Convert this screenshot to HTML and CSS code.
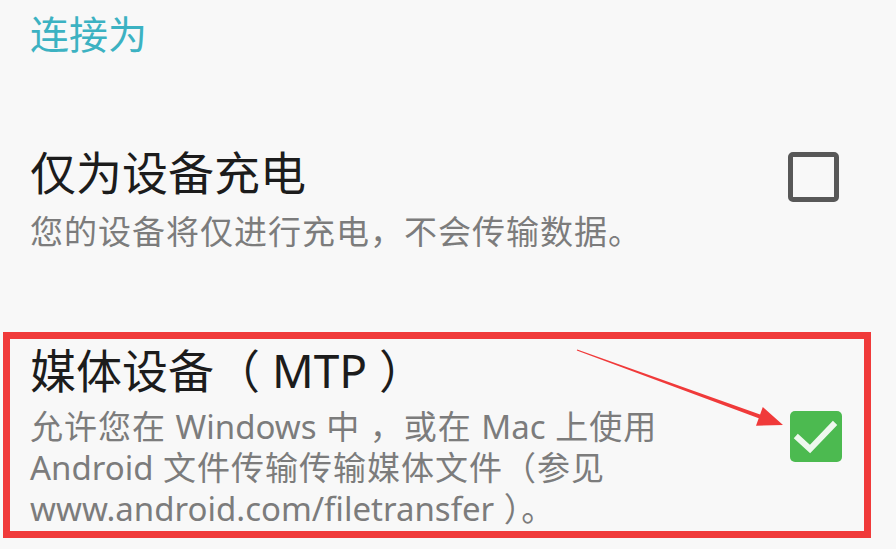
FILE: index.html
```html
<!DOCTYPE html>
<html lang="zh-CN">
<head>
<meta charset="utf-8">
<title>连接为</title>
<link rel="stylesheet" href="styles.css">
</head>
<body>
<div class="page">
  <div class="section-title">连接为</div>

  <div class="row row-first">
    <div class="row-text">
      <div class="row-title">仅为设备充电</div>
      <div class="row-sub">您的设备将仅进行充电，不会传输数据。</div>
    </div>
    <div class="checkbox checkbox-off"></div>
  </div>

  <div class="row row-highlight">
    <div class="row-text">
      <div class="row-title">媒体设备（ MTP ）</div>
      <div class="row-desc">允许您在 <span class="latin">Windows</span> 中 ，或在 <span class="latin">Mac</span> 上使用<br><span class="latin">Android</span> 文件传输传输媒体文件（参见<br><span class="latin">www.android.com/filetransfer</span> ）。</div>
    </div>
    <div class="checkbox checkbox-on">
      <svg viewBox="0 0 52 51" width="52" height="51">
        <polyline points="8,27 20,38 43,14" fill="none" stroke="#eef8ee" stroke-width="6" stroke-linecap="square" stroke-linejoin="miter"/>
      </svg>
    </div>
  </div>

  <svg class="arrow" width="896" height="549" viewBox="0 0 896 549">
    <polygon points="577.2,349.5 760.1,414.4 762.8,406.9 783,425 756,425.7 758.7,418.2 576.8,350.5" fill="#f03a3a"/>
  </svg>
</div>
</body>
</html>
```

FILE: styles.css
```css
html, body {
  margin: 0;
  padding: 0;
  background: #f8f8f8;
}

.page {
  position: relative;
  width: 896px;
  height: 549px;
  overflow: hidden;
  font-family: "Noto Sans", "Noto Sans CJK SC", sans-serif;
}

.section-title {
  margin-top: 12px;
  padding-left: 30px;
  font-size: 39px;
  line-height: 44px;
  color: #3cb2c2;
}

.row {
  display: flex;
  align-items: flex-start;
  justify-content: space-between;
}

.row-first {
  margin-top: 89px;
  padding-left: 30px;
  padding-right: 57px;
}

.row-title {
  font-size: 46px;
  line-height: 54px;
  color: #1c1c1c;
}

.row-sub {
  margin-top: 11px;
  font-size: 33px;
  line-height: 44px;
  letter-spacing: 1px;
  color: #7c7c7c;
}

.checkbox {
  flex: none;
  box-sizing: border-box;
}

.checkbox-off {
  width: 51px;
  height: 50px;
  margin-top: 7px;
  border: 5px solid #585858;
  border-radius: 5px;
}

.row-highlight {
  margin: 78px 25px 0 3px;
  border: 7px solid #f03a3a;
  padding: 4px 22px 2px 20px;
}

.row-desc {
  margin-top: 9px;
  font-size: 33px;
  line-height: 41px;
  letter-spacing: 1px;
  color: #7c7c7c;
}

.latin {
  letter-spacing: 0;
}

.checkbox-on {
  width: 52px;
  height: 51px;
  margin-top: 68px;
  background: #4cba50;
  border-radius: 5px;
}

.checkbox-on svg {
  display: block;
}

.arrow {
  position: absolute;
  left: 0;
  top: 0;
  pointer-events: none;
}
```
